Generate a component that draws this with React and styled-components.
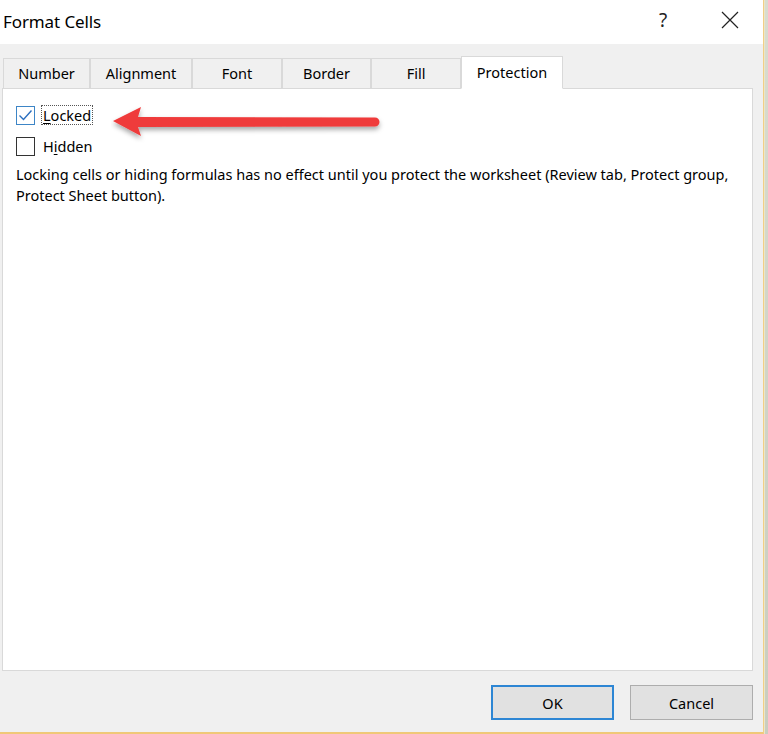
import React from "react";
import styled, { createGlobalStyle } from "styled-components";

const GlobalStyle = createGlobalStyle`
  html, body {
    margin: 0;
    padding: 0;
    background: #f0f0f0;
  }
  body {
    font-family: "Noto Sans", "Open Sans", sans-serif;
    color: #000;
  }
`;

const tabs = [
  { label: "Number", width: 87 },
  { label: "Alignment", width: 102 },
  { label: "Font", width: 90 },
  { label: "Border", width: 89 },
  { label: "Fill", width: 90 },
  { label: "Protection", width: 102, active: true },
];

const App = () => {
  return (
    <>
      <GlobalStyle />
      <Screen>
        <Dialog>
          <TitleBar>
            <Title>Format Cells</Title>
            <TitleButtons>
              <HelpButton>?</HelpButton>
              <CloseButton aria-label="Close">
                <svg width="18" height="18" viewBox="0 0 18 18">
                  <path d="M1 1 L17 17 M17 1 L1 17" stroke="#222" strokeWidth="1.2" fill="none" />
                </svg>
              </CloseButton>
            </TitleButtons>
          </TitleBar>

          <Body>
            <TabStrip>
              {tabs.map((t) => (
                <Tab key={t.label} $width={t.width} $active={t.active}>
                  {t.label}
                </Tab>
              ))}
            </TabStrip>

            <Panel>
              <CheckRow>
                <CheckBox $checked>
                  <svg width="15" height="12" viewBox="0 0 15 12">
                    <path d="M1.5 6.5 L5.5 10.5 L13.5 1.5" stroke="#2b6fbf" strokeWidth="1.4" fill="none" />
                  </svg>
                </CheckBox>
                <CheckLabel $focused>
                  <u>L</u>ocked
                </CheckLabel>
              </CheckRow>
              <CheckRow>
                <CheckBox />
                <CheckLabel>
                  H<u>i</u>dden
                </CheckLabel>
              </CheckRow>
              <Note>
                Locking cells or hiding formulas has no effect until you protect the worksheet (Review tab, Protect group,
                Protect Sheet button).
              </Note>

              {/* red annotation arrow drawn over the dialog */}
              <Arrow width="280" height="40" viewBox="0 0 280 40">
                <defs>
                  <filter id="shadow" x="-10%" y="-50%" width="120%" height="200%">
                    <feDropShadow dx="0" dy="3" stdDeviation="2.5" floodColor="#000" floodOpacity="0.35" />
                  </filter>
                </defs>
                <g filter="url(#shadow)">
                  <path d="M2 18 L30 4 L27 14 L264 14.5 A4.5 4.5 0 0 1 264 23.5 L27 24 L30 33 Z" fill="#ef3b3b" />
                </g>
              </Arrow>
            </Panel>

            <ButtonRow>
              <DialogButton $default>OK</DialogButton>
              <DialogButton>Cancel</DialogButton>
            </ButtonRow>
          </Body>
        </Dialog>
        <BackStrip />
      </Screen>
    </>
  );
};

const Screen = styled.div`
  display: flex;
  width: 768px;
  height: 734px;
  overflow: hidden;
`;

const Dialog = styled.div`
  width: 763px;
  height: 732px;
  display: flex;
  flex-direction: column;
  background: #f0f0f0;
  border-right: 1px solid #f1cf86;
  border-bottom: 2px solid #f0c878;
`;

const BackStrip = styled.div`
  flex: 1;
  background: linear-gradient(#d9dccf, #c9cdbf);
  border-left: 1px solid #ebe6c8;
`;

const TitleBar = styled.div`
  height: 44px;
  background: #fff;
  display: flex;
  align-items: center;
  justify-content: space-between;
  padding-left: 3px;
  flex-shrink: 0;
`;

const Title = styled.div`
  font-size: 17px;
  margin-top: -2px;
  letter-spacing: -0.1px;
`;

const TitleButtons = styled.div`
  display: flex;
  align-items: center;
  height: 100%;
`;

const HelpButton = styled.div`
  width: 70px;
  text-align: center;
  font-size: 19px;
  color: #222;
  margin-top: -4px;
  margin-right: 2px;
`;

const CloseButton = styled.div`
  width: 60px;
  display: flex;
  justify-content: center;
  margin-top: -4px;
  margin-right: 3px;
`;

const Body = styled.div`
  flex: 1;
  display: flex;
  flex-direction: column;
  padding: 11px 10px 0 2px;
`;

const TabStrip = styled.div`
  display: flex;
  align-items: flex-end;
  height: 33px;
  padding-left: 1px;
  position: relative;
  z-index: 1;
`;

const Tab = styled.div`
  width: ${(p) => p.$width}px;
  height: ${(p) => (p.$active ? 33 : 31)}px;
  box-sizing: border-box;
  display: flex;
  align-items: center;
  justify-content: center;
  font-size: 14.5px;
  padding-bottom: ${(p) => (p.$active ? 2 : 1)}px;
  background: ${(p) => (p.$active ? "#fff" : "#f0f0f0")};
  border: 1px solid #d9d9d9;
  border-bottom: ${(p) => (p.$active ? "1px solid #fff" : "1px solid #d9d9d9")};
  margin-bottom: -1px;
  & + & {
    border-left: ${(p) => (p.$active ? "1px solid #d9d9d9" : "none")};
  }
`;

const Panel = styled.div`
  position: relative;
  height: 583px;
  box-sizing: border-box;
  background: #fff;
  border: 1px solid #d9d9d9;
  padding: 16px 13px 0 13px;
`;

const CheckRow = styled.div`
  display: flex;
  align-items: center;
  gap: 6px;
  margin-bottom: 11px;
`;

const CheckBox = styled.div`
  width: 19px;
  height: 19px;
  box-sizing: border-box;
  border: 1px solid ${(p) => (p.$checked ? "#3d85c6" : "#333")};
  background: #fff;
  display: flex;
  align-items: center;
  justify-content: center;
`;

const CheckLabel = styled.div`
  font-size: 14.5px;
  line-height: 18px;
  padding: 0 1px;
  border: 1px dotted ${(p) => (p.$focused ? "#555" : "transparent")};
  u {
    text-decoration-thickness: 1px;
    text-underline-offset: 2px;
  }
`;

const Note = styled.p`
  margin: 0;
  margin-top: -3px;
  font-size: 14.5px;
  line-height: 21px;
`;

const Arrow = styled.svg`
  position: absolute;
  left: 108px;
  top: 14px;
`;

const ButtonRow = styled.div`
  display: flex;
  justify-content: flex-end;
  gap: 16px;
  padding-top: 14px;
  padding-right: 0;
`;

const DialogButton = styled.div`
  width: 123px;
  height: 35px;
  box-sizing: border-box;
  display: flex;
  align-items: center;
  justify-content: center;
  font-size: 14.5px;
  background: #e1e1e1;
  border: ${(p) => (p.$default ? "2px solid #2d86d4" : "1px solid #adadad")};
`;

export default App;
